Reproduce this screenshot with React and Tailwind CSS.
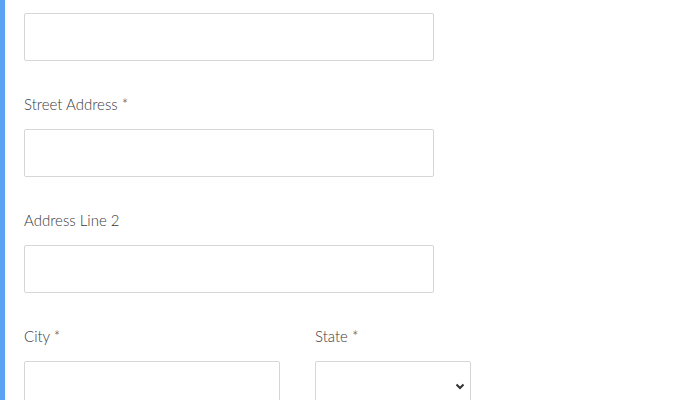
import React from "react";

function Label({ children }) {
  return (
    <div className="shrink-0 h-[20px] leading-[20px] text-[15px] font-light text-[#3a3a3a] mt-[33px] mb-[15px]">
      {children}
    </div>
  );
}

function Input({ className = "w-[410px]" }) {
  return <div className={`${className} shrink-0 h-[48px] border border-[#d6d6d6] rounded-[2px] bg-white`} />;
}

export default function App() {
  return (
    <div className="w-[686px] h-[400px] overflow-hidden bg-white flex" style={{ fontFamily: "Lato, 'Open Sans', sans-serif" }}>
      <div className="w-[5px] h-full bg-[#5aa2f2] shrink-0" />
      <div className="pl-[19px] pt-[13px] flex flex-col">
        <Input />
        <Label>Street Address *</Label>
        <Input />
        <Label>Address Line 2</Label>
        <Input />
        <div className="flex gap-[35px] shrink-0">
          <div className="flex flex-col">
            <Label>City *</Label>
            <Input className="w-[256px]" />
          </div>
          <div className="flex flex-col">
            <Label>State *</Label>
            <div className="shrink-0 w-[156px] h-[48px] border border-[#d6d6d6] rounded-[2px] bg-white flex items-center justify-end pr-[5px] pt-[2px]">
              <svg width="10" height="7" viewBox="0 0 10 7">
                <path d="M1.5 1.5 L5 5 L8.5 1.5" fill="none" stroke="#333" strokeWidth="2" />
              </svg>
            </div>
          </div>
        </div>
      </div>
    </div>
  );
}
